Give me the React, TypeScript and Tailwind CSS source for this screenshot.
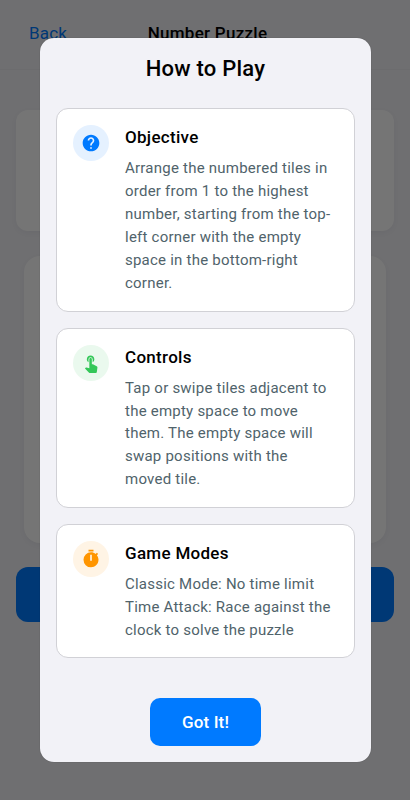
import React from "react";
import { MdHelp, MdTouchApp } from "react-icons/md";

function TimerIcon() {
  return (
    <svg viewBox="0 0 24 24" className="size-5" fill="currentColor">
      <path d="M19.03 7.39l1.42-1.42c-.45-.51-.9-.97-1.41-1.41L17.62 6c-1.55-1.26-3.5-2-5.62-2a9 9 0 0 0-9 9 9 9 0 0 0 9 9c5 0 9-4.03 9-9 0-2.12-.74-4.07-1.97-5.61M13 14h-2V7h2zm2-13H9v2h6z" />
    </svg>
  );
}

type SectionProps = {
  icon: React.ReactNode;
  tint: string;
  title: string;
  lines: string[];
  className: string;
};

function Section({ icon, tint, title, lines, className }: SectionProps) {
  return (
    <section className={`flex gap-4 rounded-xl border border-[#d1d1d6] bg-white p-4 ${className}`}>
      <div className={`flex size-9 shrink-0 items-center justify-center rounded-full ${tint}`}>{icon}</div>
      <div className="whitespace-nowrap">
        <h2 className="text-[17px] leading-6 font-medium tracking-[0.3px] text-black">{title}</h2>
        <p className="mt-2 text-[15px] leading-[22.88px] tracking-[0.23px] text-[#50636b]">
          {lines.map((line) => (
            <span key={line} className="block">{line}</span>
          ))}
        </p>
      </div>
    </section>
  );
}

export default function App() {
  return (
    <div className="relative h-[800px] w-[410px] overflow-hidden bg-[#f2f2f7] font-['Roboto',sans-serif]">
      <header className="grid h-[70px] grid-cols-[1fr_auto_1fr] items-end border-b border-[#ebebf0] pr-[24px] pb-6 pl-[29px] text-[17px] leading-6">
        <span className="tracking-[0.15px] text-[#007aff]">Back</span>
        <span className="font-medium tracking-[0.28px] text-black">Number Puzzle</span>
      </header>
      <main className="flex flex-col px-4 pt-10">
        <div className="h-[121px] rounded-xl bg-white shadow-[0_2px_8px_rgba(0,0,0,0.05)]" />
        <div className="mx-2 mt-[25px] h-[287px] rounded-2xl bg-white shadow-[0_2px_8px_rgba(0,0,0,0.05)]" />
        <div className="mt-6 h-[55px] rounded-xl bg-[#007aff]" />
      </main>
      <div className="absolute inset-0 bg-black/54 pt-[37.5px] pl-10">
        <div className="flex h-[724.5px] w-[331px] flex-col items-center rounded-[14px] bg-[#f2f2f7] px-4 shadow-[0_0_1px_rgba(0,0,0,0.4)]">
          <h1 className="mt-[17.5px] text-[22px] leading-7 font-medium tracking-[0.22px] text-black">How to Play</h1>
          <div className="mt-[25.4px] flex w-full flex-col gap-4">
            <Section
              className="h-[203.3px]"
              icon={<MdHelp className="size-5 text-[#007aff]" />}
              tint="bg-[#e5f1ff]"
              title="Objective"
              lines={["Arrange the numbered tiles in", "order from 1 to the highest", "number, starting from the top-", "left corner with the empty", "space in the bottom-right", "corner."]}
            />
            <Section
              className="h-[180.3px]"
              icon={<MdTouchApp className="size-5 text-[#34c759]" />}
              tint="bg-[#eaf9ee]"
              title="Controls"
              lines={["Tap or swipe tiles adjacent to", "the empty space to move", "them. The empty space will", "swap positions with the", "moved tile."]}
            />
            <Section
              className="h-[134.5px]"
              icon={<TimerIcon />}
              tint="bg-[#fff4e5] text-[#ff9500]"
              title="Game Modes"
              lines={["Classic Mode: No time limit", "Time Attack: Race against the", "clock to solve the puzzle"]}
            />
          </div>
          <button className="mt-10 h-[48px] w-[111px] rounded-[10px] bg-[#007aff] text-[17px] leading-6 font-medium tracking-[0.15px] text-white">Got It!</button>
        </div>
      </div>
    </div>
  );
}
